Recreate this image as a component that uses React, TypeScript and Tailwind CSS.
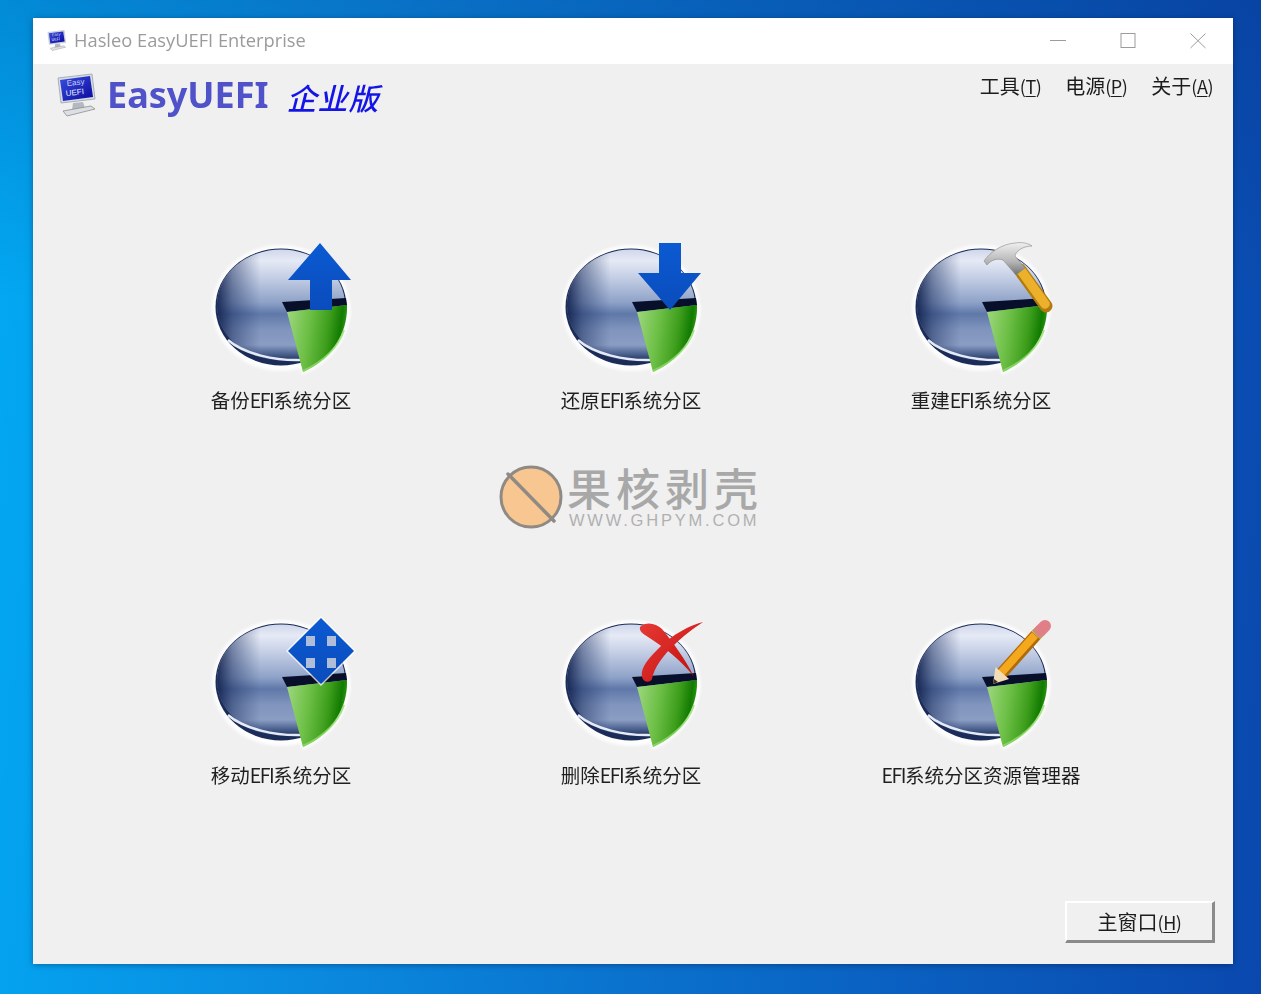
import React from 'react';

const cjk = "font-['Noto_Sans_CJK_SC',sans-serif]";

const DiskDefs = () => (
  <defs>
    <linearGradient id="face" x1="0" y1="0" x2="0" y2="1">
      <stop offset="0" stopColor="#cfd7ea" />
      <stop offset="0.1" stopColor="#e6eaf6" />
      <stop offset="0.3" stopColor="#b9c5df" />
      <stop offset="0.48" stopColor="#8da1c7" />
      <stop offset="0.58" stopColor="#5f78a9" />
      <stop offset="0.72" stopColor="#8094bd" />
      <stop offset="0.86" stopColor="#8a9dc3" />
      <stop offset="0.94" stopColor="#4c628f" />
      <stop offset="1" stopColor="#22335f" />
    </linearGradient>
    <linearGradient id="shade" x1="0" y1="0" x2="1" y2="0">
      <stop offset="0" stopColor="#0e1e4a" stopOpacity="0.9" />
      <stop offset="0.12" stopColor="#1c3060" stopOpacity="0.5" />
      <stop offset="0.34" stopColor="#2a4070" stopOpacity="0" />
    </linearGradient>
    <linearGradient id="wedge" x1="0" y1="0" x2="1" y2="0.15">
      <stop offset="0" stopColor="#a0d880" />
      <stop offset="0.4" stopColor="#6cbf45" />
      <stop offset="0.72" stopColor="#3e9e1c" />
      <stop offset="0.92" stopColor="#127c02" />
      <stop offset="1" stopColor="#2c9412" />
    </linearGradient>
    <linearGradient id="blue" x1="0" y1="0" x2="0" y2="1">
      <stop offset="0" stopColor="#0b5ad2" />
      <stop offset="1" stopColor="#0a4cbc" />
    </linearGradient>
    <linearGradient id="steel" x1="0" y1="0" x2="0" y2="1">
      <stop offset="0" stopColor="#f0f0f0" />
      <stop offset="0.6" stopColor="#b4b4b4" />
      <stop offset="1" stopColor="#707070" />
    </linearGradient>
    <linearGradient id="red" x1="0" y1="0" x2="1" y2="1">
      <stop offset="0" stopColor="#e83a34" />
      <stop offset="1" stopColor="#c01010" />
    </linearGradient>
    <filter id="soft" x="-20%" y="-20%" width="140%" height="140%">
      <feGaussianBlur stdDeviation="1.4" />
    </filter>
    <filter id="softer" x="-20%" y="-20%" width="140%" height="140%">
      <feGaussianBlur stdDeviation="0.6" />
    </filter>
  </defs>
);

const UpArrow = () => (
  <path d="M130 13 L161 50 L142 50 L142 80 L120 80 L120 50 L98 50 Z" fill="url(#blue)" />
);

const DownArrow = () => (
  <path d="M119 13 L141 13 L141 43 L161 43 L130 80 L98 43 L119 43 Z" fill="url(#blue)" />
);

const Hammer = () => (
  <g>
    <line x1="130" y1="40" x2="156" y2="76" stroke="#b07c10" strokeWidth="13" strokeLinecap="round" />
    <line x1="130" y1="39" x2="155" y2="74" stroke="#ecb02a" strokeWidth="9.5" strokeLinecap="round" />
    <path
      d="M94 31 C100 22 112 14 125 13 C132 12 138 13 142 16 C133 16 126 21 125 26 L135 38 L126 45 L113 30 C107 28 101 30 97 35 Z"
      fill="url(#steel)"
      stroke="#8a8a8a"
      strokeWidth="0.6"
    />
  </g>
);

const MoveDiamond = () => (
  <g>
    <path d="M131 11 L166 46 L131 81 L96 46 Z" fill="#ffffff" opacity="0.75" filter="url(#softer)" />
    <path d="M131 13 L164 46 L131 79 L98 46 Z" fill="url(#blue)" />
    <rect x="116" y="31" width="9" height="10" fill="#aebdd8" />
    <rect x="137" y="31" width="9" height="10" fill="#aebdd8" />
    <rect x="116" y="53" width="9" height="10" fill="#aebdd8" />
    <rect x="137" y="53" width="9" height="10" fill="#aebdd8" />
  </g>
);

const RedCross = () => (
  <g>
    <path
      d="M100 22 C106 16 116 18 122 24 C132 36 146 55 154 72 C142 56 124 42 108 32 C103 29 99 26 100 22 Z"
      fill="url(#red)"
    />
    <path
      d="M163 17 C150 20 132 30 120 42 C110 52 100 62 102 72 C104 78 110 78 112 74 C114 62 124 50 134 40 C142 32 154 23 163 17 Z"
      fill="url(#red)"
    />
  </g>
);

const Pencil = () => (
  <g>
    <line x1="111" y1="69" x2="146" y2="30" stroke="#b06a08" strokeWidth="12" />
    <line x1="111" y1="68" x2="145" y2="30" stroke="#f3a81e" strokeWidth="8" />
    <line x1="146" y1="30" x2="151" y2="25" stroke="#c09a60" strokeWidth="12" />
    <line x1="151" y1="25" x2="155" y2="21" stroke="#e07f88" strokeWidth="12" strokeLinecap="round" />
    <path d="M103 79 L105.500 62 L119 74 Z" fill="#f3dcb8" />
    <path d="M103 79 L104 74 L108 77 Z" fill="#3a3026" />
  </g>
);

const DiskIcon = ({ children }: { children: React.ReactNode }) => (
  <svg width="150" height="150" viewBox="16 5 150 150" className="blur-[0.3px]">
    <DiskDefs />
    <ellipse cx="91" cy="78" rx="69" ry="63" fill="#ffffff" opacity="0.85" filter="url(#soft)" />
    <path d="M112 145 C140 134 162 108 160 74 L100 80 Z" fill="#ffffff" opacity="0.85" filter="url(#soft)" />
    <ellipse cx="91" cy="77" rx="65.5" ry="58.500" fill="#1c2c58" />
    <ellipse cx="91" cy="75" rx="64" ry="55.500" fill="url(#face)" />
    <ellipse cx="91" cy="75" rx="64" ry="55.500" fill="url(#shade)" />
    <path d="M38 110 C54 124 85 131 112 130" fill="none" stroke="#e4eaf8" strokeWidth="2.5" filter="url(#softer)" />
    <path d="M92 72 L156 68 L157 75 L97 82 Z" fill="#070f2b" />
    <path d="M97 82 L157 75 C158 105 140 130 113 142 Z" fill="url(#wedge)" />
    <path d="M113 141 C132 132 148 118 154 100" fill="none" stroke="#8edc6a" strokeWidth="2" opacity="0.8" />
    {children}
  </svg>
);

const items = [
  { pre: '备份', post: '系统分区', overlay: <UpArrow /> },
  { pre: '还原', post: '系统分区', overlay: <DownArrow /> },
  { pre: '重建', post: '系统分区', overlay: <Hammer /> },
  { pre: '移动', post: '系统分区', overlay: <MoveDiamond /> },
  { pre: '删除', post: '系统分区', overlay: <RedCross /> },
  { pre: '', post: '系统分区资源管理器', overlay: <Pencil /> },
];

const MonitorIcon = ({ className }: { className: string }) => (
  <svg viewBox="0 0 40 46" className={className}>
    <defs>
      <linearGradient id="screen" x1="0" y1="0" x2="1" y2="1">
        <stop offset="0" stopColor="#3a4ee0" />
        <stop offset="1" stopColor="#0a0a9c" />
      </linearGradient>
    </defs>
    <path d="M1 5 L35 1 L38 26 L4 30 Z" fill="#d8dce4" stroke="#9aa0ac" strokeWidth="0.8" />
    <path d="M3 7 L33 3 L36 24 L6 28 Z" fill="url(#screen)" />
    <text x="10" y="13" fontSize="8" fill="#c8d0f0" fontFamily="Liberation Sans" transform="rotate(-6 10 13)">Easy</text>
    <text x="9" y="23" fontSize="8" fill="#e8ecff" fontFamily="Liberation Sans" transform="rotate(-6 9 23)">UEFI</text>
    <path d="M16 30 L26 29 L28 35 L15 37 Z" fill="#b4b8c0" />
    <path d="M6 38 L34 33 L38 36 L10 43 Z" fill="#dcdfe4" stroke="#8e8e8e" strokeWidth="0.8" />
  </svg>
);

const MenuItem = ({ label, keyName }: { label: string; keyName: string }) => (
  <span className={`${cjk} text-[20px] leading-none text-[#1c1c1c] blur-[0.25px] flex items-baseline`}>
    {label}
    <span className="text-[18px] tracking-[-0.5px]">
      (<span className="underline underline-offset-2">{keyName}</span>)
    </span>
  </span>
);

export default function App() {
  return (
    <div className="w-[1261px] h-[994px] overflow-hidden pl-[33px] pt-[18px] bg-[linear-gradient(to_bottom,rgba(0,30,110,0.22),rgba(0,30,110,0)_30%),linear-gradient(95deg,#02a9f3_0%,#0a8ee2_25%,#0a70cc_55%,#0a48ae_100%)]">
      <div className="relative w-[1200px] h-[946px] flex flex-col bg-[#f0f0f0] shadow-[0_1px_6px_rgba(0,0,40,0.35)]">
        {/* title bar */}
        <div className="h-[46px] shrink-0 bg-white flex items-center justify-between pl-[14px]">
          <div className="flex items-center gap-[7px]">
            <MonitorIcon className="w-[20px] h-[22px] blur-[0.3px]" />
            <span className="font-['Open_Sans',sans-serif] text-[18.3px] -mt-[2px] text-[#9b9b9b] blur-[0.2px]">
              Hasleo EasyUEFI Enterprise
            </span>
          </div>
          <div className="flex">
            <div className="w-[70px] flex justify-center">
              <svg width="16" height="16" viewBox="0 0 16 16" fill="none" stroke="#9c9c9c">
                <line x1="0" y1="7.5" x2="16" y2="7.5" />
              </svg>
            </div>
            <div className="w-[70px] flex justify-center">
              <svg width="16" height="16" viewBox="0 0 16 16" fill="none" stroke="#9c9c9c">
                <rect x="1" y="0.5" width="14" height="14" />
              </svg>
            </div>
            <div className="w-[70px] flex justify-center">
              <svg width="16" height="16" viewBox="0 0 16 16" fill="none" stroke="#9c9c9c">
                <path d="M0.5 0.5 L15.5 15 M15.5 0.5 L0.5 15" />
              </svg>
            </div>
          </div>
        </div>

        {/* header */}
        <div className="h-[60px] shrink-0 flex justify-between pl-[24px] pr-[20px]">
          <div className="flex items-start pt-[9px]">
            <MonitorIcon className="w-[40px] h-[46px]" />
            <span className="ml-[10px] font-['Noto_Sans',sans-serif] font-bold text-[36px] leading-[44px] text-[#4f52c9] blur-[0.3px]">
              EasyUEFI
            </span>
            <span className={`${cjk} ml-[18px] mt-[4px] text-[30px] leading-[40px] tracking-[1px] italic text-[#1414e6] font-medium blur-[0.2px]`}>
              企业版
            </span>
          </div>
          <div className="flex gap-[24px] pt-[12px] h-fit">
            <MenuItem label="工具" keyName="T" />
            <MenuItem label="电源" keyName="P" />
            <MenuItem label="关于" keyName="A" />
          </div>
        </div>

        {/* actions */}
        <div className="mt-[111px] pl-[73px] w-[1123px] shrink-0 grid grid-cols-3 auto-rows-[375px]">
          {items.map((item) => (
            <div key={item.pre + item.post} className="flex flex-col items-center">
              <DiskIcon>{item.overlay}</DiskIcon>
              <span className={`${cjk} text-[19.5px] leading-[30px] text-[#1f1f1f] whitespace-nowrap blur-[0.25px]`}>
                {item.pre}
                <span className="tracking-[-1.5px]">EFI</span>
                {item.post}
              </span>
            </div>
          ))}
        </div>

        {/* footer */}
        <div className="absolute right-[18px] bottom-[21px] w-[150px] h-[42px] flex items-center justify-center bg-[#f0f0f0] border-t-2 border-l-2 border-r-[3px] border-b-[3px] border-t-white border-l-white border-r-[#8a8a8a] border-b-[#8a8a8a]">
          <MenuItem label="主窗口" keyName="H" />
        </div>

        {/* watermark */}
        <div className="absolute left-[466px] top-[447px] flex items-center gap-[2px]">
          <svg width="66" height="66" viewBox="0 0 66 66">
            <circle cx="32" cy="32" r="30" fill="#f8c690" stroke="#908a84" strokeWidth="3" />
            <line x1="9" y1="9" x2="55" y2="56" stroke="#908a84" strokeWidth="3.5" strokeLinecap="round" />
          </svg>
          <div className="flex flex-col">
            <span className={`${cjk} text-[44px] leading-[40px] mb-[4px] tracking-[5px] font-medium text-[#a8a8a8] whitespace-nowrap`}>果核剥壳</span>
            <span className="ml-[2px] font-['Liberation_Sans',sans-serif] text-[16.5px] leading-[18px] tracking-[2.8px] text-[#b0b0b0] whitespace-nowrap">
              WWW.GHPYM.COM
            </span>
          </div>
        </div>
      </div>
    </div>
  );
}
